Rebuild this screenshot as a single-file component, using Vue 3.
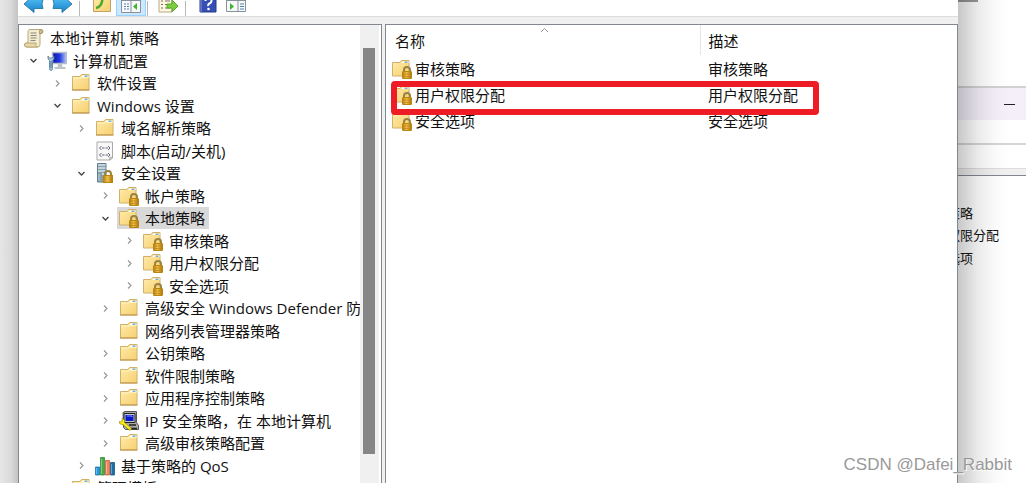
<script setup>
import { ref } from 'vue'

const nodes = [
  { level: 0, icon: 'scroll', text: '本地计算机 策略' },
  { level: 1, icon: 'computer', text: '计算机配置', state: 'open' },
  { level: 2, icon: 'folder', text: '软件设置', state: 'closed' },
  { level: 2, icon: 'folder', text: 'Windows 设置', state: 'open' },
  { level: 3, icon: 'folder', text: '域名解析策略', state: 'closed' },
  { level: 3, icon: 'script', text: '脚本(启动/关机)' },
  { level: 3, icon: 'server', text: '安全设置', state: 'open' },
  { level: 4, icon: 'locked', text: '帐户策略', state: 'closed' },
  { level: 4, icon: 'locked', text: '本地策略', state: 'open' },
  { level: 5, icon: 'locked', text: '审核策略', state: 'closed' },
  { level: 5, icon: 'locked', text: '用户权限分配', state: 'closed' },
  { level: 5, icon: 'locked', text: '安全选项', state: 'closed' },
  { level: 4, icon: 'folder', text: '高级安全 Windows Defender 防', state: 'closed' },
  { level: 4, icon: 'folder', text: '网络列表管理器策略' },
  { level: 4, icon: 'folder', text: '公钥策略', state: 'closed' },
  { level: 4, icon: 'folder', text: '软件限制策略', state: 'closed' },
  { level: 4, icon: 'folder', text: '应用程序控制策略', state: 'closed' },
  { level: 4, icon: 'ipsec', text: 'IP 安全策略，在 本地计算机', state: 'closed' },
  { level: 4, icon: 'folder', text: '高级审核策略配置', state: 'closed' },
  { level: 3, icon: 'bars', text: '基于策略的 QoS', state: 'closed' },
  { level: 2, icon: 'folder', text: '管理模板', state: 'closed' },
]
const selected = ref(8)
const policies = ['审核策略', '用户权限分配', '安全选项']
const behind = ['策略', '权限分配', '选项']
</script>

<template>
  <div class="desktop">
    <svg class="defs" aria-hidden="true">
      <defs>
        <linearGradient id="gFolder" x1="0" y1="0" x2="1" y2="1">
          <stop offset="0" stop-color="#ffecaa" /><stop offset="1" stop-color="#f6cf70" />
        </linearGradient>
        <linearGradient id="gLock" x1="0" y1="0" x2="1" y2="0">
          <stop offset="0" stop-color="#b87d10" /><stop offset=".45" stop-color="#efc044" /><stop offset="1" stop-color="#ad7410" />
        </linearGradient>
        <linearGradient id="gArrow" x1="0" y1="0" x2="0" y2="1">
          <stop offset="0" stop-color="#5cc6f5" /><stop offset="1" stop-color="#1583d0" />
        </linearGradient>
        <linearGradient id="gScreen" x1="0" y1="0" x2="1" y2="0">
          <stop offset="0" stop-color="#0a12a8" /><stop offset=".5" stop-color="#2037e0" /><stop offset="1" stop-color="#b8c8fa" />
        </linearGradient>
        <symbol id="i-folder" viewBox="0 0 20 20">
          <path d="M1.500 3.500h7.500l1.500-2h7.500v15.500h-16.500z" fill="url(#gFolder)" stroke="#d3b06a" />
          <path d="M10.500 4l1-1.500h6v1.500z" fill="#fffdf2" /><path d="M13.500 2.500h3v1.500h-3z" fill="#6fb2e2" />
          <path d="M2 5h8l1-.5h6.500" fill="none" stroke="#fff3c4" />
          <path d="M1 17h17.500" stroke="#b9914b" />
        </symbol>
        <symbol id="i-locked" viewBox="0 0 20 20">
          <path d="M.5 3.500h7.500l1.500-2h7.500v15.500h-16.500z" fill="url(#gFolder)" stroke="#d3b06a" />
          <path d="M9.500 4l1-1.500h6v1.500z" fill="#fffdf2" /><path d="M12.500 2.500h3v1.500h-3z" fill="#6fb2e2" />
          <path d="M12 13v-2a3 3 0 0 1 6 0v2" fill="none" stroke="#9a8240" stroke-width="2" />
          <rect x="10.500" y="12.500" width="9" height="7" rx=".5" fill="url(#gLock)" stroke="#b8860f" />
          <path d="M11 15h8M11 17.500h8" stroke="#b9831c" stroke-width=".7" />
        </symbol>
        <symbol id="i-scroll" viewBox="0 0 20 20">
          <path d="M5 1.500h12q2 0 2 2t-2 2h-1v11q0 2.500-2.500 2.500h-11q-2 0-2-2t2-2h1.500v-10q0-3 1-3.500z" fill="#f3ecd2" stroke="#b9a97c" />
          <path d="M15.500 5.500v-2q0-2 1.500-2t1.500 2-1.500 2z" fill="#d5c18c" stroke="#a08b5b" stroke-width=".8" />
          <path d="M2 15h10q-1 3 1.500 4h-11q-2-.5-2-2t1.500-2z" fill="#e7d8a8" stroke="#b19a63" stroke-width=".8" />
          <path d="M6.500 5h6M6.500 7.500h6M6.500 10h6M6.500 12.500h5" stroke="#8f8a78" />
        </symbol>
        <symbol id="i-computer" viewBox="0 0 20 20">
          <path d="M5.500 1.500h14v11h-14z" fill="url(#gScreen)" stroke="#b7bdc5" stroke-width="1.500" />
          <path d="M11 13h4l.5 3h3v2h-11v-2h3z" fill="#bfc4c8" />
          <path d="M1 5v3l1.500 1.500v8q0 2 1.500 2t1.500-2v-8l1.500-1.500v-3l-1.500 2h-3z" fill="#a7c6de" stroke="#56788e" stroke-width=".8" />
          <path d="M4 10v7" stroke="#3474a8" />
        </symbol>
        <symbol id="i-script" viewBox="0 0 20 20">
          <path d="M2 1h15.500v16l-2 2h-13.500z" fill="#f8f8f8" stroke="#a9a9a9" />
          <path d="M17.500 16l-3 3v-2.500z" fill="#ccc" stroke="#999" stroke-width=".5" />
          <path d="M6.500 5l-2 2 2 2M13 5l2 2-2 2M7 7h2.500M10.500 7h2.500M6.500 12l-2 2 2 2M13 12l2 2-2 2M7 14h2.500M10.500 14h2.500" fill="none" stroke="#66667a" stroke-width="1" />
        </symbol>
        <symbol id="i-server" viewBox="0 0 20 20">
          <path d="M2.500 .5h8.500v18.500h-8.500z" fill="#87a0ae" stroke="#647d8a" />
          <path d="M3 2h7.500M3 5h7.500M3 8h7.500" stroke="#d5e4ec" stroke-width="1.300" />
          <path d="M4 11v7" stroke="#bdd0d9" /><circle cx="8" cy="11" r="1" fill="#d6edf8" />
          <path d="M10 13v-2a3 3 0 0 1 6 0v2" fill="none" stroke="#9a8240" stroke-width="2" />
          <rect x="8.500" y="12.500" width="9" height="7" fill="url(#gLock)" stroke="#b8860f" />
        </symbol>
        <symbol id="i-ipsec" viewBox="0 0 20 20">
          <path d="M4 1.500l2-1h11.500v11l2 3v4h-13l-2-2z" fill="#aaa9a5" stroke="#555" />
          <path d="M5 2.500h11v9h-11z" fill="#c4c4c4" stroke="#222" /><path d="M6.500 4h8v6h-8z" fill="#0717cf" />
          <path d="M8 5h5v1" fill="none" stroke="#7b94ff" />
          <path d="M10 14h7M11 17.500h7" stroke="#222" stroke-width="1.500" />
          <path d="M3 7.500l2.500 1.500v2.500l7 6-1.500 2-7-6-3-.5-1-2.500 2.500.5.500-1z" fill="#ffee18" stroke="#8a7d00" stroke-width=".6" />
        </symbol>
        <symbol id="i-bars" viewBox="0 0 20 20">
          <path d="M.5 11h4v8h-4z" fill="#1f9be0" stroke="#14679c" stroke-width=".7" />
          <path d="M5.500 1.500h4v17.500h-4z" fill="#43ad46" stroke="#2b7f31" stroke-width=".7" />
          <path d="M10.500 4.500h4v14.500h-4z" fill="#f5845c" stroke="#bd5131" stroke-width=".7" />
          <path d="M15.500 6.500h4v12.500h-4z" fill="#1a6fa5" stroke="#114b73" stroke-width=".7" />
          <path d="M1.500 12v6M6.500 3v15M11.500 6v12M16.500 8v10" stroke="#fff" opacity=".35" />
        </symbol>
      </defs>
    </svg>

    <div class="edge"></div>

    <main class="console">
      <div class="toolbar">
        <button aria-label="后退"><svg width="22" height="22" viewBox="0 0 22 22"><path d="M1 12L11 3v4.500h9q-2 4.500 0 9h-9v4z" fill="url(#gArrow)" stroke="#357ca6" /></svg></button>
        <button aria-label="前进"><svg width="22" height="22" viewBox="0 0 22 22"><path d="M21 12L11 3v4.500h-9q2 4.500 0 9h9v4z" fill="url(#gArrow)" stroke="#357ca6" /></svg></button>
        <i class="sep wide"></i>
        <button aria-label="上一级"><svg width="20" height="20" viewBox="0 0 20 20"><path d="M1.500 3.500h8l2-2h7v16h-17z" fill="url(#gFolder)" stroke="#c3a164" /><path d="M4 14q6-1 6.500-10" fill="none" stroke="#48a82d" stroke-width="2.500" /></svg></button>
        <button class="pressed" aria-label="显示/隐藏控制台树"><svg width="20" height="20" viewBox="0 0 20 20"><path d="M.5.500h19v18h-19z" fill="#f7f8f8" stroke="#87919c" /><path d="M1 6.500h18M10 7v11" stroke="#87919c" /><path d="M3 10h2M3 12.500h2M3 15h2M6 10h2M6 12.500h2M6 15h2" stroke="#5482b6" /><path d="M16 9v7l-4-3.500z" fill="#42b32e" /></svg></button>
        <i class="sep tight"></i>
        <button aria-label="导出列表"><svg width="20" height="20" viewBox="0 0 20 20"><path d="M1 1h13v17h-13z" fill="#fff8dc" stroke="#b6a987" /><path d="M3 7h2M3 10.500h2M3 14h2M7 7h5M7 10.500h4M7 14h5" stroke="#766f72" /><path d="M9 10h5v-4l6 6-6 6v-4h-5z" fill="#79cf3e" stroke="#54a928" /></svg></button>
        <i class="sep"></i>
        <button aria-label="帮助"><svg width="18" height="20" viewBox="0 0 18 20"><path d="M1 1h16v17h-16z" fill="#354fb5" stroke="#253c88" /><path d="M2 1v17" stroke="#8596d5" /><path d="M6.500 7q0-3 3-3t3 3q0 1.500-2 2.500t-1 2.500" fill="none" stroke="#fff" stroke-width="2" /><circle cx="9.500" cy="15" r="1.300" fill="#fff" /></svg></button>
        <button aria-label="显示/隐藏操作窗格"><svg width="20" height="20" viewBox="0 0 20 20"><path d="M.5.500h19v17h-19z" fill="#f7f8f8" stroke="#87919c" /><path d="M1 6.500h18M12 7v11" stroke="#87919c" /><path d="M4 9v7l4-3.500z" fill="#42b32e" /><path d="M14 10h4M14 12.500h4M14 15h4" stroke="#5482b6" /></svg></button>
      </div>

      <div class="panes">
        <nav class="tree-pane">
          <ul class="tree">
            <li v-for="(n, i) in nodes" :key="i" :class="['node', 'level-' + n.level]">
              <span class="twist">
                <svg v-if="n.state === 'open'" width="9" height="9" viewBox="0 0 9 9"><path d="M1.500 3l3 3 3-3" fill="none" stroke="#444" stroke-width="1.300" /></svg>
                <svg v-else-if="n.state" width="9" height="9" viewBox="0 0 9 9"><path d="M3 1.500l3 3-3 3" fill="none" stroke="#999" stroke-width="1.200" /></svg>
              </span>
              <button :class="['item', { selected: selected === i }]" @click="selected = i">
                <svg class="icon"><use :href="'#i-' + n.icon" /></svg>
                <span>{{ n.text }}</span>
              </button>
            </li>
          </ul>
          <div class="track"><div class="thumb"></div></div>
        </nav>

        <section class="list-pane">
          <svg class="sort" width="9" height="6" viewBox="0 0 9 6"><path d="M1 5l3.500-3.500L8 5" fill="none" stroke="#999" /></svg>
          <table>
            <thead>
              <tr><th class="name">名称</th><th class="desc">描述</th></tr>
            </thead>
            <tbody>
              <tr v-for="p in policies" :key="p">
                <td><div class="cell"><svg class="icon"><use href="#i-locked" /></svg>{{ p }}</div></td>
                <td class="desc">{{ p }}</td>
              </tr>
            </tbody>
          </table>
          <div class="marker"></div>
        </section>
      </div>
    </main>

    <aside class="behind">
      <div class="top"></div>
      <div class="title"><button aria-label="最小化"></button></div>
      <div class="menu"></div>
      <div class="tools"></div>
      <div class="gap"></div>
      <ul><li v-for="b in behind" :key="b">{{ b }}</li></ul>
    </aside>

    <div class="watermark">CSDN @Dafei_Rabbit</div>
  </div>
</template>

<style>
body { margin: 0; }
</style>

<style scoped>
.desktop {
  position: relative;
  display: grid;
  grid-template-columns: 18px minmax(0, 1fr) 68px;
  height: 100vh;
  overflow: hidden;
  background: #fff;
  color: #111;
  font: 15px/22px "Open Sans", "Noto Sans CJK SC", sans-serif;
}
.defs { position: absolute; width: 0; height: 0; }
button { margin: 0; padding: 0; border: 0; background: none; color: inherit; font: inherit; }
ul { margin: 0; padding: 0; list-style: none; }
.edge { background: linear-gradient(90deg, #e6e6e6, #dadada 60%, #c2c2c2); }
.console { display: flex; flex-direction: column; min-width: 0; min-height: 0; background: #f0f0f0; }
.toolbar {
  display: flex;
  align-items: flex-end;
  flex: none;
  height: 16px;
  padding-left: 2px;
  overflow: hidden;
  background: #fff;
  border-bottom: 1px solid #dcdcdc;
}
.toolbar button { display: flex; align-items: flex-end; justify-content: center; width: 28px; height: 26px; flex: none; padding-bottom: 2px; box-sizing: border-box; }
.toolbar .pressed { width: 30px; background: #cce8ff; border: 1px solid #99d1ff; padding-bottom: 1px; }
.sep { flex: none; width: 1px; height: 15px; margin: 0 8px 0 3px; background: #b9b9b9; }
.sep.wide { margin: 0 8px 0 3px; }
.sep.tight { margin: 0 6px 0 1px; }
.panes { display: grid; grid-template-columns: 364px minmax(0, 1fr); column-gap: 3px; flex: 1; min-height: 0; margin-top: 7px; }
.tree-pane, .list-pane { position: relative; overflow: hidden; background: #fff; border: solid #828790; border-width: 1px 1px 0; }
.tree-pane { display: grid; grid-template-columns: minmax(0, 1fr) 21px; }
.tree { min-width: 0; overflow: hidden; padding-top: 2px; }
.node { display: flex; align-items: center; height: 22px; white-space: nowrap; }
.node:nth-child(even) { height: 23px; }
.level-0 { padding-left: 0; }
.level-1 { padding-left: 3px; }
.level-2 { padding-left: 27px; }
.level-3 { padding-left: 51px; }
.level-4 { padding-left: 75px; }
.level-5 { padding-left: 99px; }
.twist { display: flex; align-items: center; justify-content: center; flex: none; width: 23px; }
.level-0 .twist { width: 3px; }
.item { display: flex; align-items: center; gap: 6px; height: 22px; padding: 0 4px 0 2px; }
.selected { background: #d9d9d9; }
.icon { flex: none; width: 20px; height: 20px; }
.track { margin-right: 2px; background: #f0f0f0; padding: 23px 4px 0 3px; }
.thumb { height: 406px; background: #868686; }
.sort { position: absolute; left: 154px; top: 2px; }
table { width: 100%; table-layout: fixed; border-collapse: collapse; }
th { height: 30px; padding: 2px 0 0 9px; box-sizing: border-box; font-weight: 400; text-align: left; }
th.name { width: 314px; border-right: 1px solid #e5e5e5; }
td { height: 26px; padding: 0 0 0 6px; }
tr:first-child td { height: 27px; }
th.desc, td.desc { padding-left: 8px; }
.cell { display: flex; align-items: center; gap: 3px; }
.marker { position: absolute; left: 5px; top: 56px; width: 416px; height: 22px; border: 6px solid #ee1c25; border-radius: 4px; }
.behind { position: relative; overflow: hidden; background: #fff; font-size: 13px; }
.behind::after {
  content: "";
  position: absolute;
  inset: 0;
  background: linear-gradient(90deg, rgba(0, 0, 0, .22), rgba(0, 0, 0, .08) 30%, rgba(0, 0, 0, .02) 55%, transparent 75%);
  pointer-events: none;
}
.top { height: 86px; border-bottom: 2px solid #d2d1d4; background: linear-gradient(#999, #999) 0 0 / 20px 2px no-repeat; }
.title { display: flex; align-items: center; justify-content: flex-end; height: 32px; background: #f4eff8; }
.title button { width: 11px; height: 1px; margin-right: 11px; background: #222; }
.menu { height: 23px; border-bottom: 2px solid #d6d6d9; }
.tools { height: 23px; border-bottom: 1px solid #ddd; }
.gap { height: 6px; background: #f0f0f0; border-bottom: 1px solid #828790; }
.behind ul { padding-top: 26px; }
.behind li { margin-left: -11px; height: 22px; white-space: nowrap; }
.behind li:nth-child(even) { height: 23px; }
.watermark {
  position: absolute;
  right: 14px;
  bottom: 6px;
  color: #999;
  font: 17px/24px "Liberation Sans", sans-serif;
  text-shadow: 1px 1px 0 #fff;
}
</style>
